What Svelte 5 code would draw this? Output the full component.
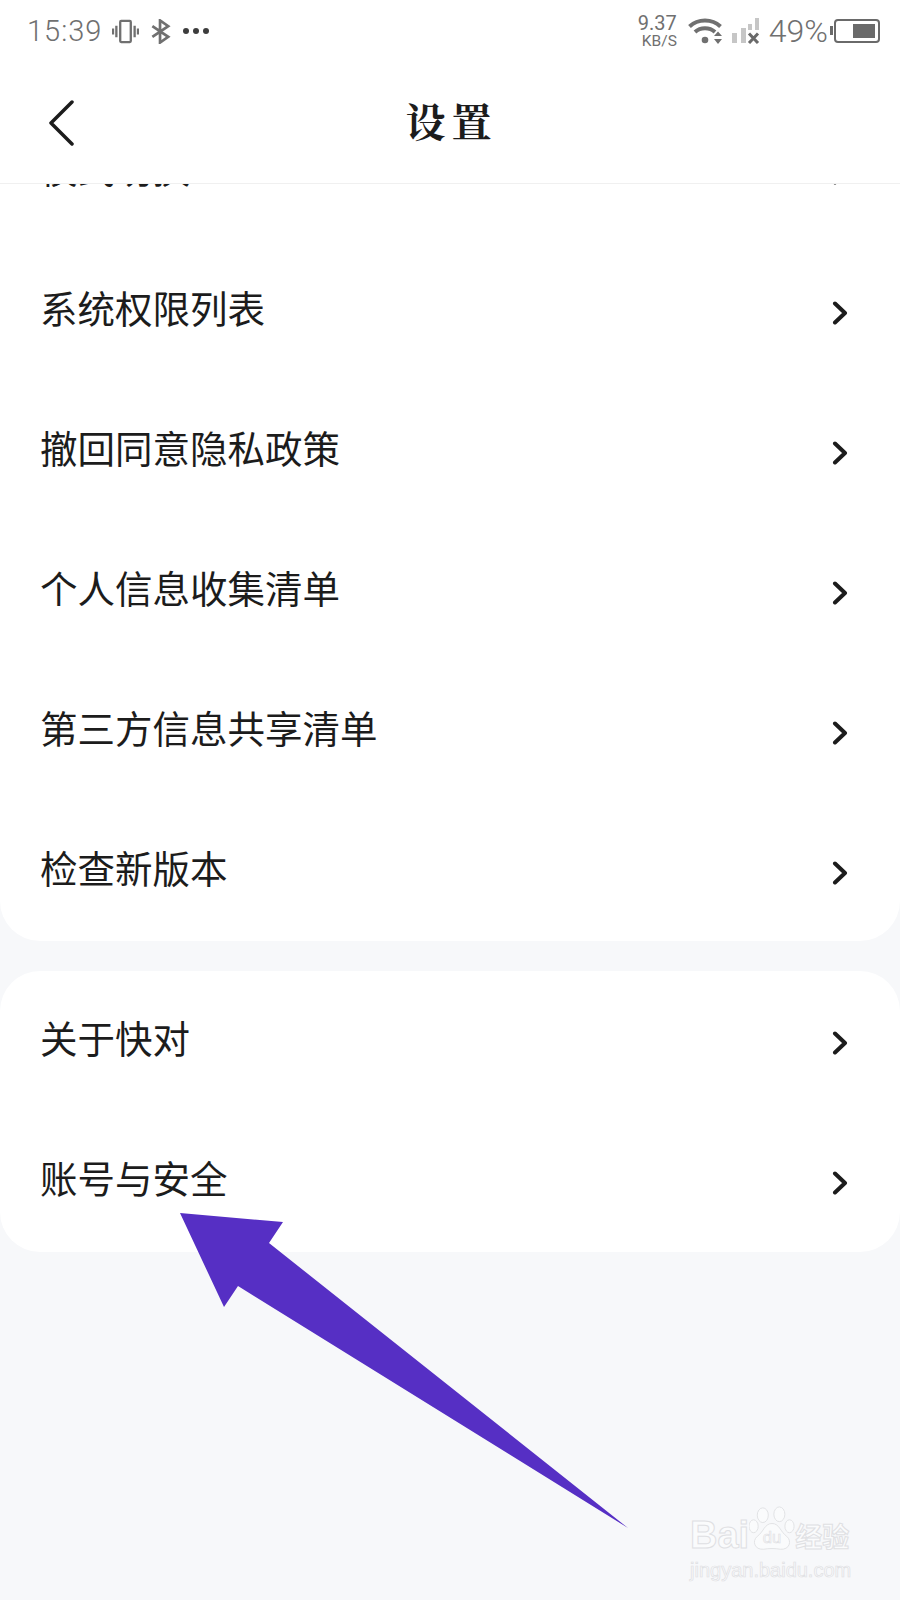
<script>
	const firstGroup = ['模式切换', '系统权限列表', '撤回同意隐私政策', '个人信息收集清单', '第三方信息共享清单', '检查新版本'];
	const secondGroup = ['关于快对', '账号与安全'];
</script>

{#snippet row(label)}
	<div class="row">
		<span class="label">{label}</span>
		<svg class="chevron" viewBox="0 0 16 24" aria-hidden="true">
			<path d="M3 2.500 L13 12 L3 21.500" />
		</svg>
	</div>
{/snippet}

<div class="page">
	<header class="top">
		<div class="status">
			<div class="status-left">
				<span class="time">15:39</span>
				<svg class="ic-vibrate" viewBox="0 0 28 26" aria-hidden="true">
					<rect x="8.500" y="2" width="11" height="22" rx="1" />
					<path d="M4.500 7v12M1 10v6M23.500 7v12M27 10v6" />
				</svg>
				<svg class="ic-bt" viewBox="0 0 22 26" aria-hidden="true">
					<path d="M2 7.500 L18.500 18.500 L10 24.500 V1.500 L18.500 7.500 L2 18.500" />
				</svg>
				<span class="dots"><i></i><i></i><i></i></span>
			</div>
			<div class="status-right">
				<div class="speed"><span>9.37</span><span class="unit">KB/S</span></div>
				<svg class="ic-wifi" viewBox="0 0 36 26" aria-hidden="true">
					<path class="arc" d="M1.500 8.500 C10 0.500 24 0.500 32.500 8.500" />
					<path class="arc" d="M7 14 C12.500 9 21.500 9 27 14" />
					<circle cx="17" cy="22" r="3.300" />
					<path d="M30 13.500 L34 18 H26 Z M30 26 L34 21 H26 Z" />
				</svg>
				<svg class="ic-signal" viewBox="0 0 28 26" aria-hidden="true">
					<rect class="dim" x="0" y="15" width="5" height="10" />
					<rect class="dim" x="9" y="10" width="5" height="15" />
					<rect class="dim" x="16" y="6" width="4" height="6" />
					<rect class="dim" x="23" y="0" width="4" height="12" />
					<path class="cross" d="M17 15.500 L26 25 M26 15.500 L17 25" />
				</svg>
				<span class="pct">49%</span>
				<div class="battery"><span class="level"></span></div>
			</div>
		</div>
		<div class="nav">
			<svg class="back" viewBox="0 0 26 46" aria-hidden="true">
				<path d="M24 2 L3 23 L24 44" />
			</svg>
			<h1>设置</h1>
		</div>
	</header>

	<main class="scroller">
		<section class="card first">
			{#each firstGroup as label}
				{@render row(label)}
			{/each}
		</section>
		<section class="card second">
			{#each secondGroup as label}
				{@render row(label)}
			{/each}
		</section>
	</main>

	<svg class="arrow" viewBox="0 0 900 1600" aria-hidden="true">
		<polygon points="180,1213 283,1222 269,1243 628,1528 238,1286 224,1307" />
	</svg>

	<div class="watermark" aria-hidden="true">
		<div class="wm-top">
			<span>Bai</span>
			<svg class="paw" viewBox="0 0 50 50">
				<ellipse cx="15" cy="10" rx="6" ry="8" />
				<ellipse cx="33" cy="9" rx="6" ry="8" />
				<ellipse cx="5" cy="22" rx="5" ry="7" />
				<ellipse cx="44" cy="22" rx="5" ry="7" />
				<path d="M25 19 C33 19 34 28 41 33 C47 38 44 48 34 47 C29 46 21 46 16 47 C6 48 3 38 9 33 C16 28 17 19 25 19 Z" />
				<text x="25" y="40" text-anchor="middle">du</text>
			</svg>
			<span class="cn">经验</span>
		</div>
		<div class="wm-url">jingyan.baidu.com</div>
	</div>
</div>

<style>
	:global(body) {
		margin: 0;
		background: #f7f8fa;
	}
	.page {
		position: relative;
		display: flex;
		flex-direction: column;
		width: 900px;
		height: 1600px;
		overflow: hidden;
		background: #f7f8fa;
		font-family: 'Noto Sans CJK SC', 'Noto Sans', sans-serif;
		color: #1c1c1c;
	}
	.top {
		flex: none;
		height: 183px;
		background: #fff;
		border-bottom: 1px solid #f0f0f0;
	}
	.status {
		display: flex;
		justify-content: space-between;
		align-items: center;
		height: 62px;
		padding: 0 20px 0 27px;
		color: #707070;
	}
	.status-left,
	.status-right {
		display: flex;
		align-items: center;
	}
	.time {
		font-family: Roboto, sans-serif;
		font-weight: 300;
		font-size: 29px;
		letter-spacing: 1px;
		line-height: 1;
		margin-right: 10px;
	}
	.ic-vibrate {
		width: 27px;
		height: 25px;
		fill: none;
		stroke: #707070;
		stroke-width: 2.400;
		margin-right: 11px;
	}
	.ic-bt {
		width: 22px;
		height: 25px;
		fill: none;
		stroke: #707070;
		stroke-width: 2.800;
		margin-right: 11px;
	}
	.dots {
		display: flex;
		gap: 4px;
	}
	.dots i {
		width: 6px;
		height: 6px;
		border-radius: 50%;
		background: #3d3d3d;
	}
	.speed {
		display: flex;
		flex-direction: column;
		align-items: flex-end;
		font-family: Roboto, sans-serif;
		font-size: 20px;
		line-height: 20px;
		margin-right: 11px;
	}
	.speed .unit {
		font-size: 15.500px;
		line-height: 17px;
	}
	.ic-wifi {
		width: 36px;
		height: 26px;
		fill: #707070;
		margin-right: 8px;
	}
	.arc {
		fill: none;
		stroke: #707070;
		stroke-width: 4;
	}
	.ic-signal {
		width: 28px;
		height: 26px;
		margin-right: 9px;
	}
	.dim {
		fill: #c6c6c6;
	}
	.cross {
		fill: none;
		stroke: #6a6a6a;
		stroke-width: 3;
	}
	.pct {
		font-family: Roboto, sans-serif;
		font-weight: 300;
		font-size: 32px;
		line-height: 1;
		margin-right: 6px;
	}
	.battery {
		position: relative;
		display: flex;
		justify-content: flex-end;
		box-sizing: border-box;
		width: 46px;
		height: 24px;
		padding: 3px;
		border: 2.500px solid #6a6a6a;
		border-radius: 4px;
	}
	.battery::before {
		content: '';
		position: absolute;
		left: -6px;
		top: 5px;
		width: 3px;
		height: 9px;
		background: #6a6a6a;
	}
	.level {
		width: 22px;
		background: #6a6a6a;
	}
	.nav {
		position: relative;
		display: flex;
		align-items: center;
		justify-content: center;
		height: 121px;
	}
	.back {
		position: absolute;
		left: 48px;
		top: 38px;
		width: 26px;
		height: 46px;
		fill: none;
		stroke: #1c1c1c;
		stroke-width: 3.500;
		stroke-linecap: round;
		stroke-linejoin: round;
	}
	h1 {
		margin: 0 0 6px 3px;
		font-family: 'Noto Serif CJK SC', 'Noto Sans CJK SC', serif;
		font-size: 40px;
		font-weight: 700;
		letter-spacing: 6px;
		line-height: 1;
	}
	.scroller {
		flex: 1;
		min-height: 0;
		overflow: hidden;
	}
	.card {
		background: #fff;
		border-radius: 40px;
		margin-bottom: 30px;
	}
	.card.first {
		margin-top: -85px;
		padding-bottom: 2px;
	}
	.card.second {
		padding-bottom: 1px;
	}
	.row {
		box-sizing: border-box;
		display: flex;
		align-items: center;
		justify-content: space-between;
		height: 140px;
		padding: 0 52px 0 40px;
	}
	.card.second .row {
		padding-bottom: 4px;
	}
	.label {
		margin-bottom: 5px;
		font-size: 37.500px;
		font-weight: 400;
		line-height: 1;
	}
	.chevron {
		width: 16px;
		height: 24px;
		margin-top: 8px;
		fill: none;
		stroke: #1c1c1c;
		stroke-width: 4;
		stroke-linecap: round;
		stroke-linejoin: round;
	}
	.arrow {
		position: absolute;
		inset: 0;
		width: 900px;
		height: 1600px;
		fill: #562fc4;
	}
	.watermark {
		position: absolute;
		left: 690px;
		top: 1500px;
		width: 170px;
		color: #fafbfc;
		-webkit-text-stroke: 1px #dfe0e3;
		font-family: 'Liberation Sans', sans-serif;
	}
	.wm-top {
		display: flex;
		align-items: flex-end;
		font-size: 38px;
		font-weight: 700;
		line-height: 38px;
		height: 54px;
	}
	.wm-top .cn {
		font-family: 'Noto Sans CJK SC', sans-serif;
		font-size: 27px;
		line-height: 36px;
	}
	.paw {
		width: 46px;
		height: 50px;
		fill: #fafbfc;
		stroke: #dfe0e3;
		stroke-width: 1;
	}
	.paw text {
		font-size: 18px;
		font-weight: 400;
		stroke-width: 0.700;
		-webkit-text-stroke: 0;
	}
	.wm-url {
		margin-top: 4px;
		font-size: 20px;
		line-height: 24px;
		-webkit-text-stroke: 0.7px #dfe0e3;
	}
</style>
